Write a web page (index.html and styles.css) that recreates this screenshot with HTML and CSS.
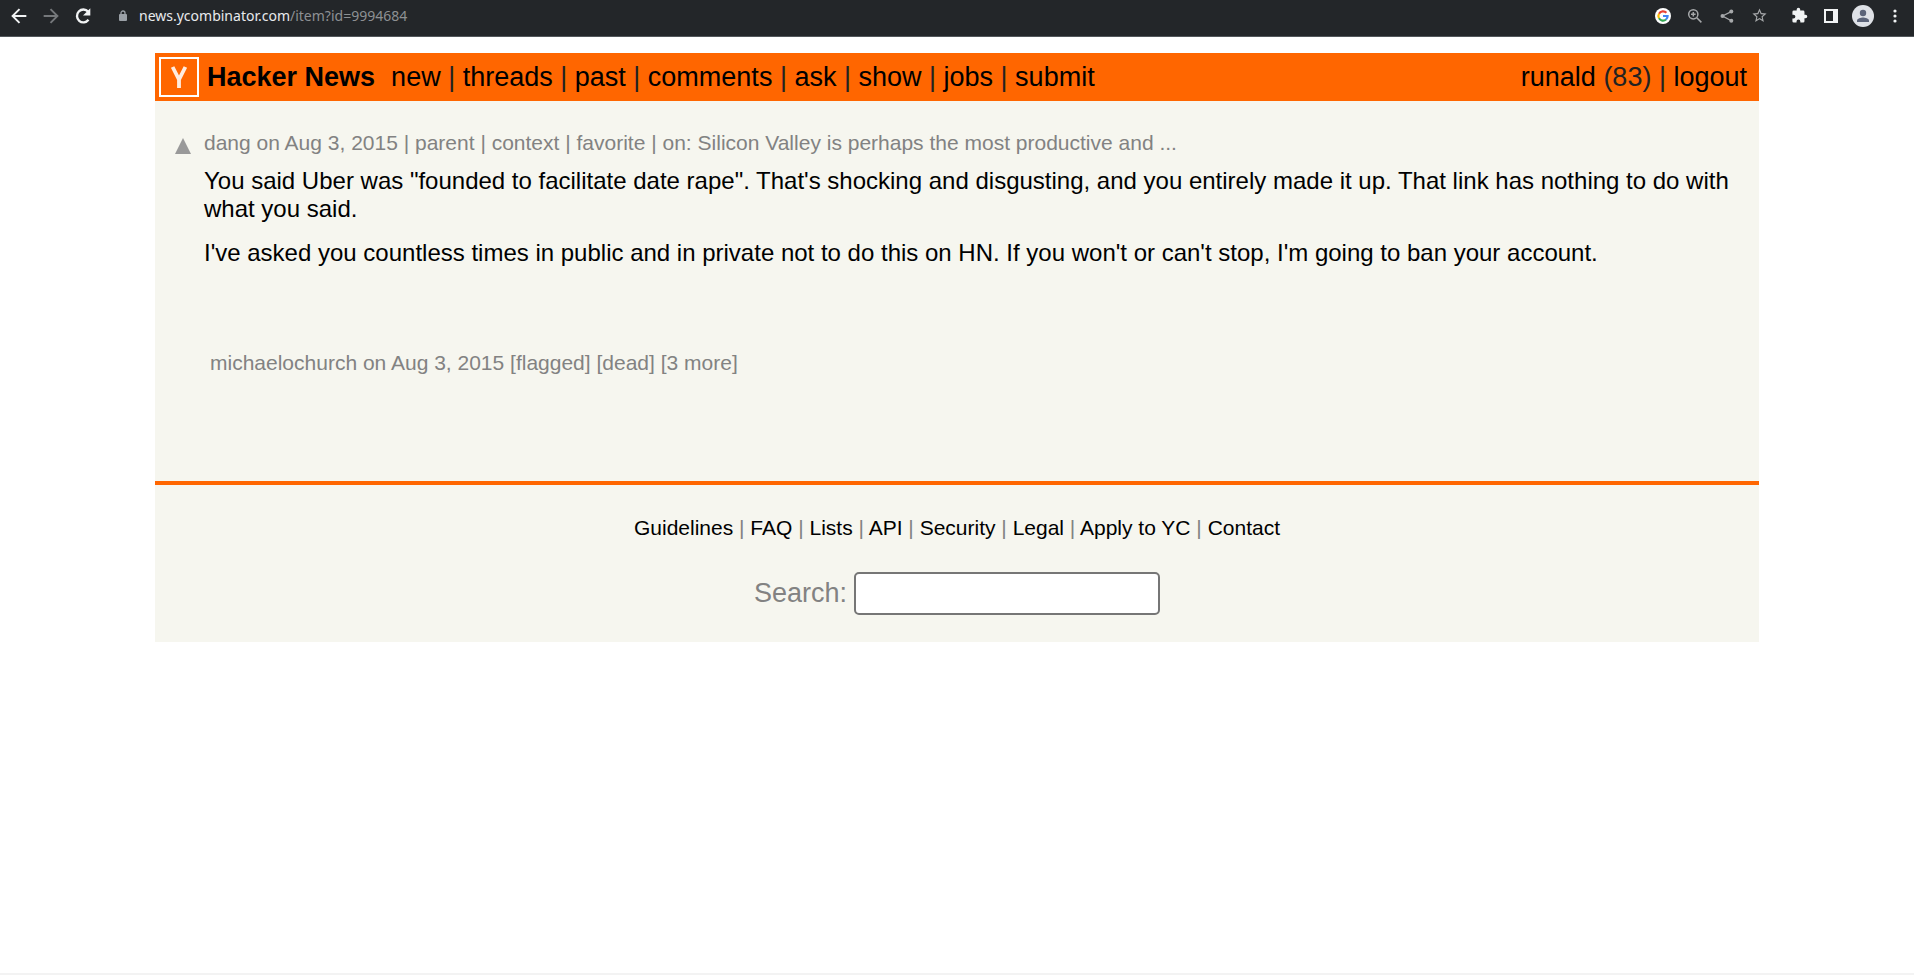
FILE: index.html
```html
<!DOCTYPE html>
<html lang="en">
<head>
<meta charset="utf-8">
<title>Hacker News</title>
<link rel="stylesheet" href="styles.css">
</head>
<body>
<header class="toolbar">
  <button class="tool" aria-label="Back"><svg viewBox="0 0 24 24" width="22" height="22"><path fill="#f1f3f4" d="M20 10.8H7.6l5.7-5.6L11.800 3.700 3.500 12l8.300 8.300 1.500-1.500-5.700-5.600H20z"/></svg></button>
  <button class="tool" aria-label="Forward"><svg viewBox="0 0 24 24" width="22" height="22"><path fill="#75787b" d="M4 10.800h12.400l-5.700-5.600 1.500-1.500 8.300 8.300-8.300 8.300-1.500-1.500 5.700-5.600H4z"/></svg></button>
  <button class="tool" aria-label="Reload"><svg viewBox="0 0 24 24" width="22" height="22"><path fill="none" stroke="#f1f3f4" stroke-width="2.600" d="M18 16.200A7 7 0 1 1 17.600 7.200"/><path fill="#f1f3f4" d="M20 3.500v8h-8z"/></svg></button>
  <div class="address">
    <svg class="lock" viewBox="0 0 8 12" width="8" height="12"><path fill="none" stroke="#9aa0a6" stroke-width="1.300" d="M2 5V3a2 2 0 0 1 4 0v2"/><rect y="4" width="8" height="7" rx="1" fill="#9aa0a6"/></svg>
    <span class="url">news.ycombinator.com<span class="path">/item?id=9994684</span></span>
  </div>
  <div class="actions">
    <button class="tool" aria-label="Google"><svg viewBox="0 0 16 16" width="16" height="16"><circle cx="8" cy="8" r="8" fill="#fff"/><g fill="none" stroke-width="2.200"><path stroke="#ea4335" d="M4 5.700A4.600 4.600 0 0 1 11.400 4.800"/><path stroke="#fbbc05" d="M4 10.300A4.600 4.600 0 0 1 4 5.700"/><path stroke="#34a853" d="M11 11.500A4.600 4.600 0 0 1 4 10.300"/><path stroke="#4285f4" d="M8 8h4.600A4.600 4.600 0 0 1 11 11.500"/></g></svg></button>
    <button class="tool" aria-label="Zoom"><svg viewBox="0 0 16 16" width="16" height="16" fill="none" stroke="#a6a8aa" stroke-width="1.500"><circle cx="6.300" cy="6.300" r="4.600"/><path d="M9.800 9.800l4.600 4.600M6.300 4v4.600M4 6.300h4.600"/></svg></button>
    <button class="tool" aria-label="Share"><svg viewBox="0 0 16 16" width="16" height="16"><path stroke="#a6a8aa" stroke-width="1.300" fill="none" d="M12.300 3.600L3.500 8l8.800 4.700"/><g fill="#a6a8aa"><circle cx="12.300" cy="3.500" r="2"/><circle cx="3.500" cy="8" r="2"/><circle cx="12.300" cy="12.700" r="2"/></g></svg></button>
    <button class="tool" aria-label="Bookmark"><svg viewBox="0 0 24 24" width="17" height="17"><path fill="#a6a8aa" d="M22 9.240l-7.190-.62L12 2 9.190 8.630 2 9.240l5.460 4.730L5.820 21 12 17.270 18.180 21l-1.630-7.030zM12 15.400l-3.760 2.270 1-4.280-3.320-2.880 4.380-.38L12 6.100l1.710 4.040 4.380.38-3.320 2.880 1 4.280z"/></svg></button>
    <button class="tool extensions" aria-label="Extensions"><svg viewBox="0 0 24 24" width="17" height="17"><path fill="#f1f3f4" d="M20.500 11H19V7a2 2 0 0 0-2-2h-4V3.500a2.500 2.500 0 0 0-5 0V5H4a2 2 0 0 0-2 2v3.800h1.500a2.700 2.700 0 0 1 0 5.400H2V20a2 2 0 0 0 2 2h3.800v-1.500a2.700 2.700 0 0 1 5.400 0V22H17a2 2 0 0 0 2-2v-4h1.500a2.500 2.500 0 0 0 0-5z"/></svg></button>
    <button class="tool" aria-label="Side panel"><svg viewBox="0 0 14 14" width="14" height="14"><path fill="#f1f3f4" fill-rule="evenodd" d="M0 0h14v14H0zM2 2v10h7V2z"/></svg></button>
    <button class="tool" aria-label="Profile"><svg viewBox="0 0 22 22" width="22" height="22"><circle cx="11" cy="11" r="11" fill="#dee1e6"/><circle cx="11" cy="8" r="3.200" fill="#5b6378"/><path fill="#5b6378" d="M5 17v-1.500c0-2 4-3 6-3s6 1 6 3V17z"/></svg></button>
    <button class="tool" aria-label="Menu"><svg viewBox="0 0 4 16" width="4" height="16" fill="#f1f3f4"><circle cx="2" cy="3" r="1.600"/><circle cx="2" cy="8" r="1.600"/><circle cx="2" cy="13" r="1.600"/></svg></button>
  </div>
</header>
<div class="page">
  <nav class="topbar">
    <a class="logo" href="#" aria-label="Y Combinator"><svg viewBox="0 0 36 36" width="36" height="36"><path fill="none" stroke="#fff" stroke-opacity=".88" stroke-width="3.800" d="M11.600 8L18 20.500 24.400 8M18 19v10"/></svg></a>
    <a class="brand" href="#">Hacker News</a>
    <span class="links"><a href="#">new</a> | <a href="#">threads</a> | <a href="#">past</a> | <a href="#">comments</a> | <a href="#">ask</a> | <a href="#">show</a> | <a href="#">jobs</a> | <a href="#">submit</a></span>
    <span class="user"><a href="#">runald</a> (83) | <a href="#">logout</a></span>
  </nav>
  <main>
    <article class="comment">
      <button class="vote" aria-label="Upvote"><svg viewBox="0 0 16 16" width="16" height="16"><path fill="#999" d="M8 0l8 16H0z"/></svg></button>
      <div class="content">
        <div class="meta"><a href="#">dang</a> <a href="#">on Aug 3, 2015</a> | <a href="#">parent</a> | <a href="#">context</a> | <a href="#">favorite</a> | on: <a href="#">Silicon Valley is perhaps the most productive and ...</a></div>
        <p>You said Uber was "founded to facilitate date rape". That's shocking and disgusting, and you entirely made it up. That link has nothing to do with what you said.</p>
        <p>I've asked you countless times in public and in private not to do this on HN. If you won't or can't stop, I'm going to ban your account.</p>
      </div>
    </article>
    <div class="meta reply"><a href="#">michaelochurch</a> <a href="#">on Aug 3, 2015</a> [flagged] [dead] <a href="#">[3 more]</a></div>
  </main>
  <footer class="footer">
    <div class="footlinks"><a href="#">Guidelines</a> | <a href="#">FAQ</a> | <a href="#">Lists</a> | <a href="#">API</a> | <a href="#">Security</a> | <a href="#">Legal</a> | <a href="#">Apply to YC</a> | <a href="#">Contact</a></div>
    <form class="search"><label for="q">Search:</label><input id="q" type="text"></form>
  </footer>
</div>
</body>
</html>
```

FILE: styles.css
```css
* { box-sizing: border-box; }
body {
  margin: 0;
  min-height: 100vh;
  display: flex;
  flex-direction: column;
  background: #fff;
  border-bottom: 2px solid #f3f3f3;
  font-family: "Liberation Sans", Arial, sans-serif;
  color: #828282;
}
a { color: inherit; text-decoration: none; }
.toolbar {
  display: flex;
  align-items: center;
  height: 37px;
  padding: 0 8px 5px 8px;
  gap: 10px;
  background: #232629;
  border-bottom: 1px solid #52575b;
}
.tool { display: flex; justify-content: center; width: 22px; padding: 0; border: 0; background: none; }
.address { display: flex; align-items: center; gap: 12px; margin-left: 15px; }
.url { font: 14px/20px "Noto Sans", sans-serif; color: #e8eaed; }
.path { color: #8d9093; }
.actions { display: flex; align-items: center; gap: 10px; margin-left: auto; }
.extensions { margin-left: 8px; }
.page { margin: 16px 155px 0; background: #f6f6ef; }
.topbar {
  display: flex;
  align-items: center;
  padding: 4px 12px 4px 4px;
  background: #f60;
  color: #222;
  font-size: 27px;
  line-height: 32px;
}
.topbar a { color: #000; }
.logo { display: flex; border: 2px solid #fff; }
.brand { margin: 0 16px 0 8px; font-weight: bold; }
.user { margin-left: auto; }
.comment { display: flex; gap: 13px; padding: 29px 12px 0 20px; }
.vote { align-self: flex-start; margin-top: 8px; padding: 0; border: 0; background: none; }
.vote svg { display: block; }
.content { flex: 1; }
.meta { font-size: 21px; line-height: 26px; }
.content p { margin: 0 0 16px; color: #000; font-size: 24px; line-height: 28px; }
.content .meta { margin-bottom: 11px; }
.reply { padding: 67px 0 105px 55px; }
.footer { border-top: 4px solid #f60; padding: 30px 0 27px; text-align: center; }
.footlinks { font-size: 21px; line-height: 26px; }
.footlinks a { color: #000; }
.search { display: flex; justify-content: center; align-items: center; gap: 7px; margin-top: 31px; font-size: 27px; }
.search input {
  width: 306px;
  height: 43px;
  padding: 2px 4px;
  border: 2px solid #767676;
  border-radius: 5px;
  background: #fff;
  font: 24px "Liberation Mono", monospace;
}
```
